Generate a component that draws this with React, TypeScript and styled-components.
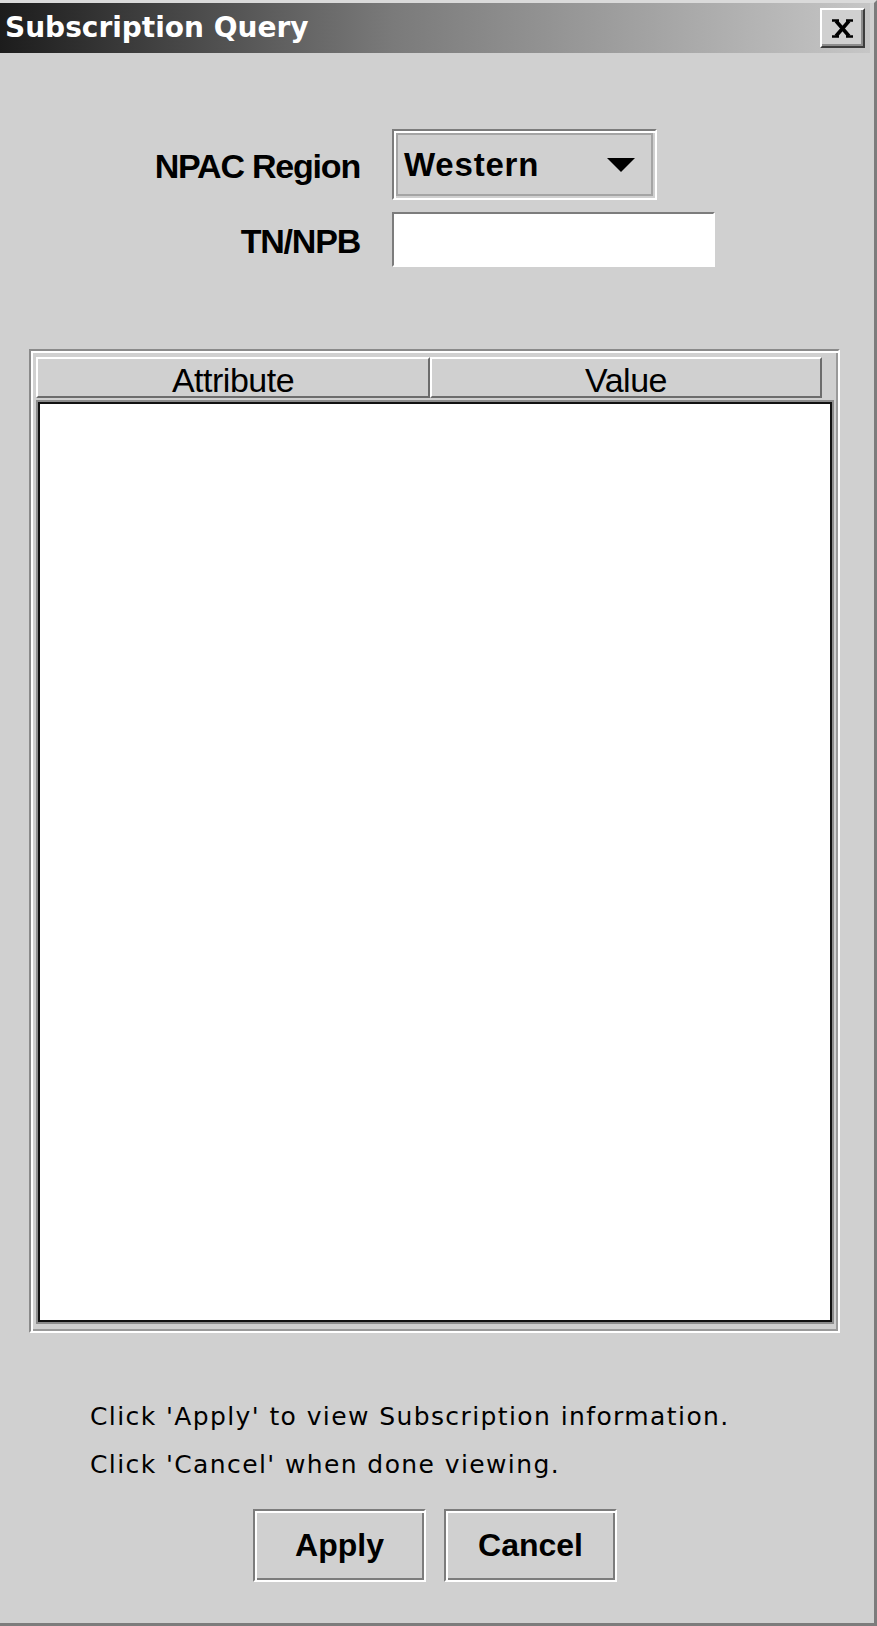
import styled, { createGlobalStyle } from "styled-components";

const GlobalStyle = createGlobalStyle`
    html, body {
        margin: 0;
        padding: 0;
        background: #d0d0d0;
    }
`;

const Frame = styled.div`
    box-sizing: border-box;
    width: 877px;
    height: 1626px;
    display: flex;
    flex-direction: column;
    background: #d0d0d0;
    border-top: 3px solid #dadada;
    border-right: 3px solid #7c7c7c;
    border-bottom: 3px solid #7c7c7c;
`;

const TitleBar = styled.div`
    height: 50px;
    margin-right: 4px;
    display: flex;
    align-items: center;
    justify-content: space-between;
    background: linear-gradient(to right, #1c1c1c 0%, #7a7a7a 45%, #c6c6c6 100%);
`;

const Title = styled.span`
    padding-left: 5px;
    font-family: "DejaVu Sans", sans-serif;
    font-weight: bold;
    font-size: 28px;
    line-height: 50px;
    color: #fff;
`;

const CloseButton = styled.button`
    box-sizing: border-box;
    width: 45px;
    height: 40px;
    margin-right: 5px;
    padding: 0;
    display: flex;
    align-items: center;
    justify-content: center;
    background: #d0d0d0;
    border: 2px solid;
    border-color: #fff #3c3c3c #3c3c3c #fff;
    box-shadow: inset -2px -2px 0 #8c8c8c;
`;

const Form = styled.div`
    margin-top: 76px;
    padding-left: 29px;
    display: grid;
    grid-template-columns: 331px auto;
    column-gap: 32px;
    row-gap: 12px;
    align-items: center;
    justify-items: start;
`;

const Label = styled.label`
    justify-self: end;
    padding-top: 3px;
    font-family: "Liberation Sans", Arial, sans-serif;
    font-weight: bold;
    font-size: 34px;
    letter-spacing: -1.2px;
    line-height: 1;
    color: #000;
`;

const ComboFrame = styled.div`
    box-sizing: border-box;
    width: 265px;
    height: 71px;
    display: flex;
    padding: 2px;
    border: 2px solid;
    border-color: #7c7c7c #fff #fff #7c7c7c;
    box-shadow: inset 2px 2px 0 #fff;
`;

const ComboInner = styled.div`
    flex: 1;
    display: flex;
    align-items: center;
    justify-content: space-between;
    padding: 0 16px 0 6px;
    border: 2px solid #a4a4a4;
    font-family: "Liberation Sans", Arial, sans-serif;
    font-weight: bold;
    font-size: 33px;
    letter-spacing: 0.8px;
    color: #000;
`;

const TextField = styled.div`
    box-sizing: border-box;
    width: 323px;
    height: 55px;
    background: #fff;
    border: 2px solid;
    border-color: #7c7c7c #fff #fff #7c7c7c;
`;

const Panel = styled.div`
    box-sizing: border-box;
    width: 811px;
    height: 984px;
    margin: 82px 0 0 29px;
    padding: 6px 6px 9px 5px;
    display: flex;
    flex-direction: column;
    border: 2px solid;
    border-color: #8a8a8a #fff #fff #8a8a8a;
    box-shadow: inset 2px 2px 0 #fff, inset -2px -2px 0 #9a9a9a;
`;

const HeaderRow = styled.div`
    display: grid;
    grid-template-columns: 394px 392px;
    height: 41px;
`;

const HeaderCell = styled.div`
    box-sizing: border-box;
    height: 41px;
    padding-top: 4px;
    text-align: center;
    background: #d0d0d0;
    border: 2px solid;
    border-color: #fff #6c6c6c #6c6c6c #fff;
    font-family: "Liberation Sans", Arial, sans-serif;
    font-size: 34px;
    letter-spacing: -0.5px;
    line-height: 34px;
    color: #000;
`;

const TableBody = styled.div`
    box-sizing: border-box;
    width: 794px;
    height: 920px;
    margin: 4px 0 0 2px;
    background: #fff;
    border: 2px solid #111;
    box-shadow: 0 0 0 2px #8c8c8c;
`;

const Notes = styled.div`
    margin: 60px 0 0 90px;
    font-family: "DejaVu Sans", sans-serif;
    font-size: 25px;
    letter-spacing: 1.4px;
    line-height: 48px;
    color: #000;
`;

const ButtonRow = styled.div`
    margin-top: 20px;
    display: flex;
    justify-content: center;
    gap: 18px;
    padding-right: 4px;
`;

const Button = styled.button`
    box-sizing: border-box;
    width: 173px;
    height: 73px;
    padding: 0;
    background: #d0d0d0;
    border: 2px solid;
    border-color: #7c7c7c #fff #fff #7c7c7c;
    box-shadow: inset 2px 2px 0 #fff, inset -2px -2px 0 #7c7c7c;
    font-family: "Liberation Sans", Arial, sans-serif;
    font-weight: bold;
    font-size: 32px;
    color: #000;
`;

const App = () => {
    return (
        <Frame>
            <GlobalStyle />
            <TitleBar>
                <Title>Subscription Query</Title>
                <CloseButton aria-label="Close">
                    <svg width="23" height="19" viewBox="0 0 23 19">
                        <path d="M5 2 L18 17 M18 2 L5 17" stroke="#000" strokeWidth="3.6" fill="none" />
                        <path d="M1 1.5 H8 M15 1.5 H22 M1 17.5 H8 M15 17.5 H22" stroke="#000" strokeWidth="2.4" fill="none" />
                    </svg>
                </CloseButton>
            </TitleBar>

            <Form>
                <Label>NPAC Region</Label>
                <ComboFrame>
                    <ComboInner>
                        <span>Western</span>
                        <svg width="28" height="14" viewBox="0 0 28 14">
                            <polygon points="0,0 28,0 14,14" fill="#000" />
                        </svg>
                    </ComboInner>
                </ComboFrame>
                <Label>TN/NPB</Label>
                <TextField />
            </Form>

            <Panel>
                <HeaderRow>
                    <HeaderCell>Attribute</HeaderCell>
                    <HeaderCell>Value</HeaderCell>
                </HeaderRow>
                <TableBody />
            </Panel>

            <Notes>
                <div>Click 'Apply' to view Subscription information.</div>
                <div>Click 'Cancel' when done viewing.</div>
            </Notes>

            <ButtonRow>
                <Button>Apply</Button>
                <Button>Cancel</Button>
            </ButtonRow>
        </Frame>
    );
};

export default App;
